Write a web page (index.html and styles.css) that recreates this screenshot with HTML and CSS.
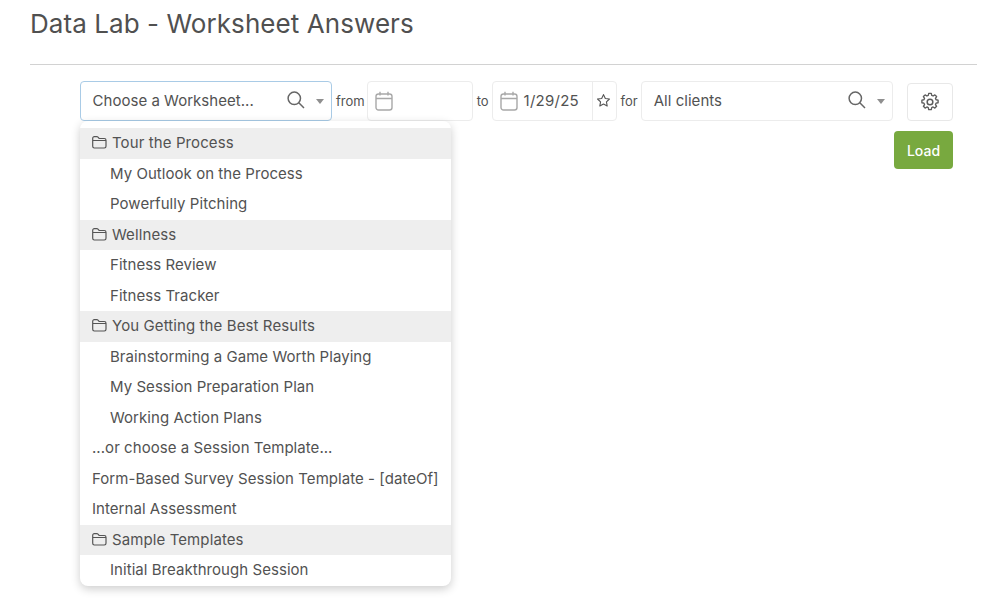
FILE: index.html
```html
<!DOCTYPE html>
<html lang="en">
<head>
  <meta charset="UTF-8">
  <title>Data Lab - Worksheet Answers</title>
  <link rel="stylesheet" href="styles.css">
</head>
<body>
  <svg class="defs" width="0" height="0">
    <symbol id="i-search" viewBox="0 0 18 18"><circle cx="7.3" cy="7.3" r="6.2"/><path d="M11.8 11.8 17 17"/></symbol>
    <symbol id="i-cal" viewBox="0 0 18 20"><rect x="1" y="3" width="16" height="16" rx="2.5"/><path d="M1 7.5h16M5 .8v3.6M13 .8v3.6"/></symbol>
    <symbol id="i-folder" viewBox="0 0 15 13"><path d="M.7 2.2C.7 1.3 1.4.7 2.3.7h2.6c.5 0 .8.2 1.100.5l1.100 1.300h5.200c1 0 1.700.7 1.700 1.700v6.100c0 1-.7 1.700-1.700 1.700H2.300c-.9 0-1.600-.7-1.600-1.700zM.7 4.500h13.600"/></symbol>
  </svg>

  <div class="page">
    <h1 class="title">Data Lab - Worksheet Answers</h1>
    <hr class="rule">

    <div class="toolbar">
      <div class="field select select-focus">
        <span class="select-text">Choose a Worksheet...</span>
        <svg class="ic-search"><use href="#i-search"/></svg>
        <span class="caret"></span>

        <div class="menu">
          <div class="row group"><svg class="ic-folder"><use href="#i-folder"/></svg>Tour the Process</div>
          <div class="row item">My Outlook on the Process</div>
          <div class="row item">Powerfully Pitching</div>
          <div class="row group"><svg class="ic-folder"><use href="#i-folder"/></svg>Wellness</div>
          <div class="row item">Fitness Review</div>
          <div class="row item">Fitness Tracker</div>
          <div class="row group"><svg class="ic-folder"><use href="#i-folder"/></svg>You Getting the Best Results</div>
          <div class="row item">Brainstorming a Game Worth Playing</div>
          <div class="row item">My Session Preparation Plan</div>
          <div class="row item">Working Action Plans</div>
          <div class="row">...or choose a Session Template...</div>
          <div class="row">Form-Based Survey Session Template - [dateOf]</div>
          <div class="row">Internal Assessment</div>
          <div class="row group"><svg class="ic-folder"><use href="#i-folder"/></svg>Sample Templates</div>
          <div class="row item">Initial Breakthrough Session</div>
        </div>
      </div>

      <span class="label label-from">from</span>
      <div class="field date date-from">
        <svg class="ic-cal"><use href="#i-cal"/></svg>
      </div>

      <span class="label label-to">to</span>
      <div class="field date date-to">
        <svg class="ic-cal"><use href="#i-cal"/></svg>
        <span class="date-value">1/29/25</span>
        <span class="star">
          <svg width="15" height="15" viewBox="0 0 24 24"><path d="M12 2.6l2.900 6.100 6.600.9-4.800 4.600 1.200 6.600-5.900-3.200-5.900 3.200 1.200-6.600L2.500 9.600l6.600-.9z"/></svg>
        </span>
      </div>

      <span class="label label-for">for</span>
      <div class="field select select-clients">
        <span class="select-text">All clients</span>
        <svg class="ic-search"><use href="#i-search"/></svg>
        <span class="caret"></span>
      </div>

      <div class="actions">
        <button class="btn-gear">
          <svg width="20" height="20" viewBox="0 0 24 24"><circle cx="12" cy="12" r="3.4"/><path d="M10.300 2.200h3.400l.6 2.700 1.800.8 2.400-1.500 2.300 2.300-1.500 2.400.8 1.800 2.700.6v3.400l-2.700.6-.8 1.800 1.500 2.400-2.300 2.300-2.400-1.500-1.800.8-.6 2.700h-3.400l-.6-2.700-1.800-.8-2.400 1.500-2.300-2.300 1.500-2.400-.8-1.800-2.700-.6v-3.400l2.700-.6.8-1.800-1.500-2.400 2.300-2.300 2.400 1.500 1.800-.8z" transform="translate(12 12) scale(.9) translate(-12 -13.700)"/></svg>
        </button>
        <button class="btn-load">Load</button>
      </div>
    </div>
  </div>
</body>
</html>
```

FILE: styles.css
```css
* {
  margin: 0;
  padding: 0;
  box-sizing: border-box;
  font-family: 'Inter', sans-serif;
}

body {
  background-color: #fff;
  color: #525252;
  font-size: 15px;
  line-height: 22.5px;
  min-height: 604px;
}

.defs {
  position: absolute;
}

.page {
  padding: 8px 23px 0 30px;
}

.title {
  font-size: 26px;
  font-weight: 400;
  line-height: 32px;
  color: #505050;
  letter-spacing: 0.07px;
}

.rule {
  border: none;
  border-top: 1px solid #d2d2d2;
  margin-top: 24px;
}

.toolbar {
  display: flex;
  align-items: flex-start;
  margin-top: 16px;
  padding-left: 50px;
  padding-right: 24px;
}

.field {
  position: relative;
  display: flex;
  align-items: center;
  height: 40px;
  border: 1px solid #ececec;
  border-radius: 4px;
  background-color: #fff;
}

.select {
  width: 252px;
  padding-left: 12px;
}

.select-focus {
  padding-left: 11.5px;
  border-color: #a9cbe6;
}

.select-text {
  flex: 1;
  letter-spacing: 0.03px;
}

.ic-search {
  width: 18px;
  height: 18px;
  fill: none;
  stroke: #666;
  stroke-width: 1.5;
  margin-right: 11px;
  margin-top: -2px;
}

.caret {
  width: 0;
  height: 0;
  border-left: 4px solid transparent;
  border-right: 4px solid transparent;
  border-top: 5px solid #8f8f8f;
  margin-right: 7px;
}

.label {
  font-size: 13px;
  line-height: 40px;
  margin: 0 3px 0 4px;
}

.label-from {
  margin-right: 2px;
}

.date {
  padding-left: 7px;
}

.date-from {
  width: 106px;
}

.date-to {
  width: 125px;
}

.ic-cal {
  width: 18px;
  height: 20px;
  fill: none;
  stroke: #a8a8a8;
  stroke-width: 1.4;
  flex-shrink: 0;
}

.date-value {
  flex: 1;
  margin-left: 6px;
  letter-spacing: 0.25px;
}

.star {
  display: flex;
  align-items: center;
  justify-content: center;
  width: 24px;
  height: 38px;
  padding: 0 2px 2px 0;
  border-left: 1px solid #ececec;
}

.star svg {
  fill: none;
  stroke: #555;
  stroke-width: 1.8;
  stroke-linejoin: round;
}

.actions {
  display: flex;
  flex-direction: column;
  align-items: flex-end;
  margin-left: auto;
  padding-top: 2px;
  gap: 10px;
}

.btn-gear {
  display: flex;
  align-items: center;
  justify-content: center;
  width: 46px;
  height: 38px;
  background-color: #fff;
  border: 1px solid #e8e8e8;
  border-radius: 4px;
}

.btn-gear svg {
  fill: none;
  stroke: #5c5c5c;
  stroke-width: 1.8;
  stroke-linejoin: round;
}

.btn-load {
  width: 59px;
  height: 38px;
  background-color: #78a93f;
  color: #fff;
  border: none;
  border-radius: 4px;
  font-size: 14px;
  font-weight: 500;
}

.menu {
  position: absolute;
  top: 39px;
  left: -1px;
  width: 370.5px;
  padding-top: 7px;
  background-color: #fff;
  border-radius: 8px;
  box-shadow: 0 3px 10px rgba(0, 0, 0, 0.2);
  overflow: hidden;
  z-index: 10;
}

.row {
  padding: 4px 12px;
  white-space: nowrap;
  letter-spacing: 0.05px;
}

.group {
  display: flex;
  align-items: center;
  background-color: #eeeeee;
  letter-spacing: 0.1px;
}

.item {
  padding-left: 30px;
}

.ic-folder {
  width: 15px;
  height: 13px;
  fill: none;
  stroke: #555;
  stroke-width: 1.2;
  margin-right: 5px;
  margin-top: -1px;
}
```
